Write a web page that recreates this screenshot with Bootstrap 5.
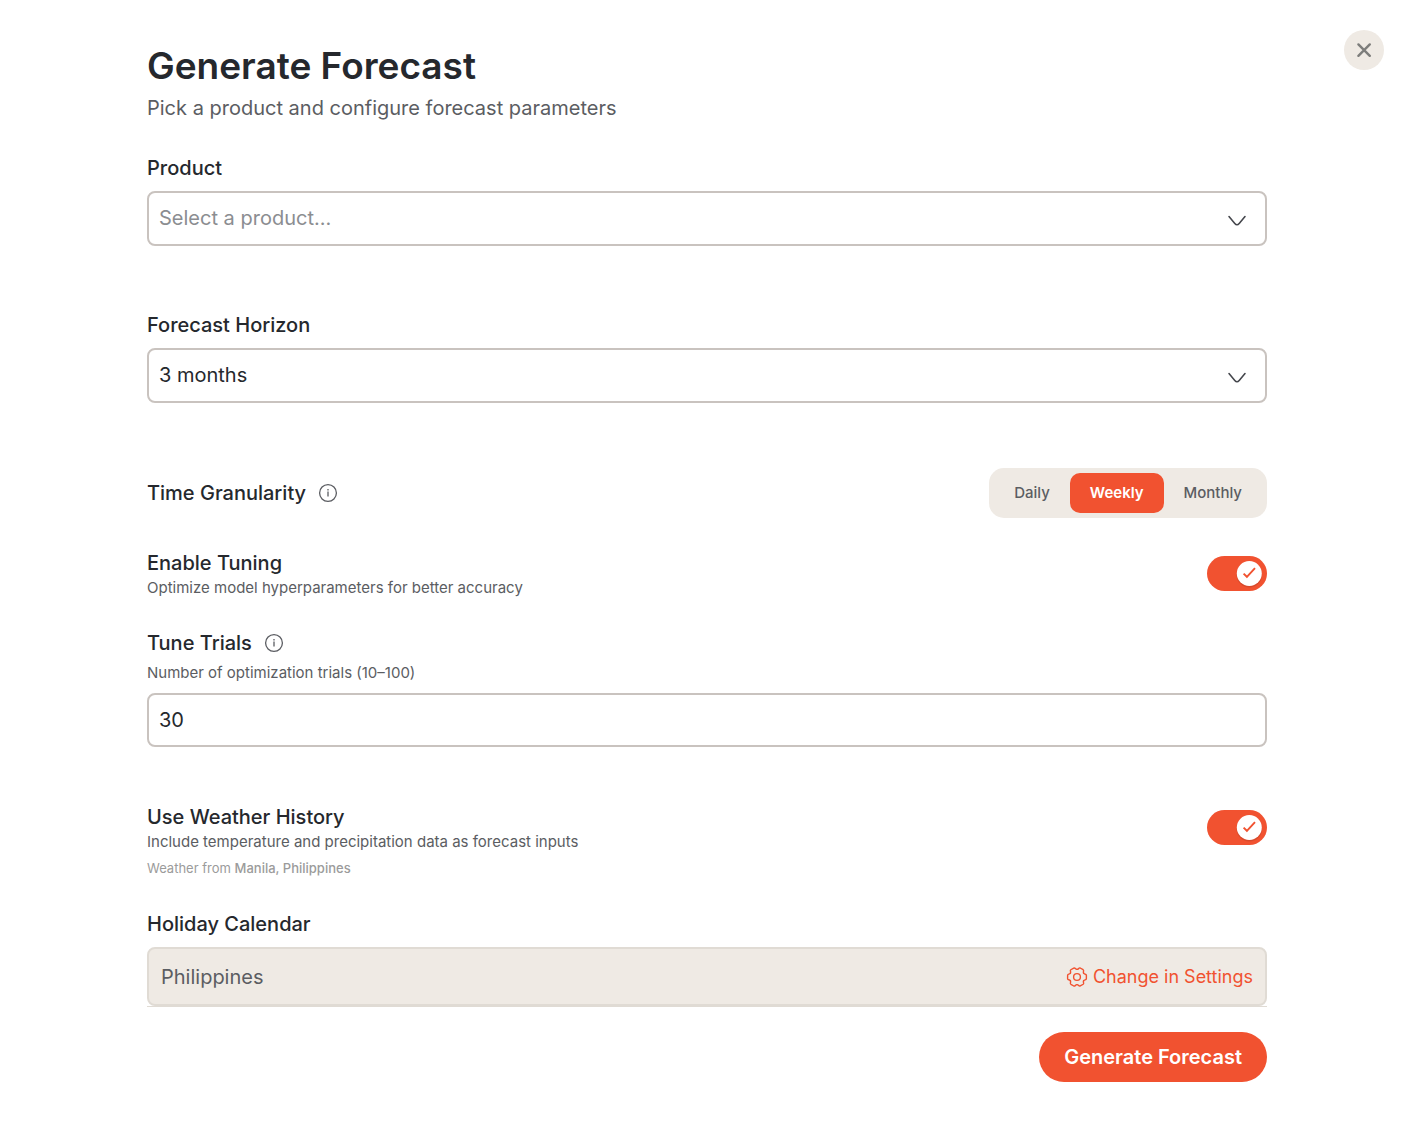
<!DOCTYPE html>
<html lang="en">
<head>
<meta charset="utf-8">
<meta name="viewport" content="width=device-width, initial-scale=1">
<title>Generate Forecast</title>
<link href="https://cdn.jsdelivr.net/npm/bootstrap@5.3.0/dist/css/bootstrap.min.css" rel="stylesheet">
<style>
  :root { --brand: #f15230; --ink: #25282d; --soft: #5b5d62; --faint: #9b9b9b; --sand: #efeae4; --line: #c9c3bf; --sand-line: #e0dbd4; }
  body { font-family: Inter, "Liberation Sans", sans-serif; font-size: 20px; line-height: 30px; color: var(--ink); background: #fff; }
  .form-shell { max-width: 1144px; padding: 44px 12px 24px; }
  .page-title { font-size: 37px; line-height: 44px; font-weight: 600; margin-bottom: 5px; }
  .intro { color: var(--soft); margin-bottom: 30px; }
  .field-label { font-size: 20px; line-height: 30px; font-weight: 500; margin: 0; }
  .field-label + .form-select, .field-label + .locked-box { margin-top: 8px; }
  .hint { font-size: 15px; line-height: 20px; color: var(--soft); margin: 0; }
  .hint-above { margin: 5px 0 10px; }
  .source-note { font-size: 13px; line-height: 18px; color: var(--faint); margin: 7px 0 2px; }
  .source-note b { font-weight: 500; }
  .form-select, .form-control { font-size: 20px; line-height: 30px; color: var(--ink); border: 2px solid var(--line); border-radius: 8px; padding: 10px; height: 54px; }
  .form-select { height: 55px; padding: 9px 48px 10px 10px; background-size: 20px 12px; background-position: right 18px top 22px;
    background-image: url("data:image/svg+xml,%3Csvg xmlns='http://www.w3.org/2000/svg' viewBox='0 0 20 12'%3E%3Cpath d='M2 1.6 7.8 8.4Q10 11 12.2 8.4L18 1.6' fill='none' stroke='%2345474d' stroke-width='1.6' stroke-linecap='round' stroke-linejoin='round'/%3E%3C/svg%3E"); }
  .form-select:invalid { color: #8b8d91; }
  .form-select option { color: var(--ink); }
  .stack-wide { display: grid; gap: 64px; margin-bottom: 65px; }
  .stack { display: grid; gap: 30px; }
  .trials-group { margin-bottom: 25px; }
  .segments { background: var(--sand); border-radius: 15px; padding: 5px; }
  .segments .btn { font-size: 15px; line-height: 20px; font-weight: 500; color: var(--soft); border: 0; border-radius: 10px; padding: 10px 20px; }
  .segments .btn-check:checked + .btn { background: var(--brand); color: #fff; font-weight: 600; }
  .title-line { gap: 12px; }
  .info-btn { line-height: 0; color: var(--soft); }
  .form-switch .form-check-input { width: 60px; height: 35px; margin: 8px 0 0; border: 0; }
  .form-switch .form-check-input:checked { background-color: var(--brand); background-size: 35px 35px; background-position: right center;
    background-image: url("data:image/svg+xml,%3Csvg xmlns='http://www.w3.org/2000/svg' viewBox='0 0 35 35'%3E%3Ccircle cx='17.3' cy='18.8' r='12.8' fill='%23000' opacity='.1'/%3E%3Ccircle cx='17.3' cy='17.5' r='12.5' fill='%23fff'/%3E%3Cpath d='M11.6 17.6 14.9 20.8 23 12.2' fill='none' stroke='%23f15230' stroke-width='1.9'/%3E%3C/svg%3E"); }
  .locked-box { background: var(--sand); border: 2px solid var(--sand-line); border-radius: 8px; padding: 12px; height: 59px; }
  .locked-box input { color: var(--soft); padding: 0; line-height: 30px; }
  .settings-link { font-size: 18px; color: var(--brand); gap: 5px; }
  .actions { border-top: 1px solid var(--sand-line); padding-top: 25px; }
  .btn-generate { font-size: 20px; line-height: 30px; font-weight: 600; color: #fff; background: var(--brand); padding: 10px 25px; border: 0; }
  .btn-generate:hover { color: #fff; background: #d94524; }
  .close-btn { top: 30px; right: 30px; width: 40px; height: 40px; background: var(--sand); color: #7d7d7b; }
</style>
<script src="https://cdn.jsdelivr.net/npm/bootstrap@5.3.0/dist/js/bootstrap.bundle.min.js"></script>
</head>
<body>
<button type="button" class="close-btn btn rounded-circle position-absolute d-flex align-items-center justify-content-center p-0 border-0" aria-label="Close">
  <svg width="16" height="16" viewBox="0 0 16 16" fill="none" stroke="currentColor" stroke-width="2.4" stroke-linecap="round" aria-hidden="true"><path d="M2.4 2.4 13.8 13.8M13.8 2.4 2.4 13.8"/></svg>
</button>
<main class="form-shell container">
  <h1 class="page-title">Generate Forecast</h1>
  <p class="intro">Pick a product and configure forecast parameters</p>
  <form>
    <div class="stack-wide">
      <div>
        <label class="field-label d-block" for="product">Product</label>
        <select class="form-select" id="product" required>
          <option value="" selected>Select a product...</option>
        </select>
      </div>
      <div>
        <label class="field-label d-block" for="horizon">Forecast Horizon</label>
        <select class="form-select" id="horizon"><option selected>3 months</option></select>
      </div>
    </div>

    <div class="stack">
      <div class="d-flex align-items-center justify-content-between">
        <div class="title-line d-flex align-items-center">
          <span class="field-label" id="granularity">Time Granularity</span>
          <button type="button" class="info-btn btn border-0 p-0" aria-label="About time granularity">
            <svg width="20" height="20" viewBox="0 0 20 20" fill="none" stroke="currentColor" stroke-width="1.3" aria-hidden="true"><circle cx="10" cy="10" r="8.4"/><path d="M10 8.6v5M10 5.9v1.5"/></svg>
          </button>
        </div>
        <div class="segments d-flex" role="radiogroup" aria-labelledby="granularity">
          <input class="btn-check" type="radio" name="granularity" id="daily"><label class="btn" for="daily">Daily</label>
          <input class="btn-check" type="radio" name="granularity" id="weekly" checked><label class="btn" for="weekly">Weekly</label>
          <input class="btn-check" type="radio" name="granularity" id="monthly"><label class="btn" for="monthly">Monthly</label>
        </div>
      </div>

      <div class="d-flex justify-content-between">
        <div>
          <label class="field-label d-block" for="tuning">Enable Tuning</label>
          <p class="hint">Optimize model hyperparameters for better accuracy</p>
        </div>
        <div class="form-switch p-0"><input class="form-check-input float-none d-block" type="checkbox" role="switch" id="tuning" checked></div>
      </div>

      <div class="trials-group">
        <div class="title-line d-flex align-items-center">
          <label class="field-label" for="trials">Tune Trials</label>
          <button type="button" class="info-btn btn border-0 p-0" aria-label="About tune trials">
            <svg width="20" height="20" viewBox="0 0 20 20" fill="none" stroke="currentColor" stroke-width="1.3" aria-hidden="true"><circle cx="10" cy="10" r="8.4"/><path d="M10 8.6v5M10 5.9v1.5"/></svg>
          </button>
        </div>
        <p class="hint hint-above">Number of optimization trials (10–100)</p>
        <input class="form-control" type="text" inputmode="numeric" id="trials" value="30">
      </div>

      <div class="d-flex justify-content-between">
        <div>
          <label class="field-label d-block" for="weather">Use Weather History</label>
          <p class="hint">Include temperature and precipitation data as forecast inputs</p>
          <p class="source-note">Weather from <b>Manila, Philippines</b></p>
        </div>
        <div class="form-switch p-0"><input class="form-check-input float-none d-block" type="checkbox" role="switch" id="weather" checked></div>
      </div>

      <div>
        <label class="field-label d-block" for="calendar">Holiday Calendar</label>
        <div class="locked-box d-flex align-items-center">
          <input class="flex-grow-1 border-0 bg-transparent" type="text" id="calendar" value="Philippines" readonly>
          <a class="settings-link d-flex align-items-center text-decoration-none" href="#settings">
            <svg width="22" height="22" viewBox="0 0 22 22" fill="none" stroke="currentColor" stroke-width="1.4" stroke-linecap="round" aria-hidden="true">
              <circle cx="11" cy="11" r="3.4"/>
              <path id="tooth" d="M11 3.4C12.9 3.4 12.6 1.3 14.2 2L17.1 3.7C18.6 4.8 16.65 5.55 17.6 7.2"/>
              <use href="#tooth" transform="rotate(60 11 11)"/>
              <use href="#tooth" transform="rotate(120 11 11)"/>
              <use href="#tooth" transform="rotate(180 11 11)"/>
              <use href="#tooth" transform="rotate(240 11 11)"/>
              <use href="#tooth" transform="rotate(300 11 11)"/>
            </svg>
            Change in Settings
          </a>
        </div>
      </div>
    </div>
    <div class="actions d-flex justify-content-end">
      <button type="submit" class="btn btn-generate rounded-pill">Generate Forecast</button>
    </div>
  </form>
</main>
</body>
</html>
